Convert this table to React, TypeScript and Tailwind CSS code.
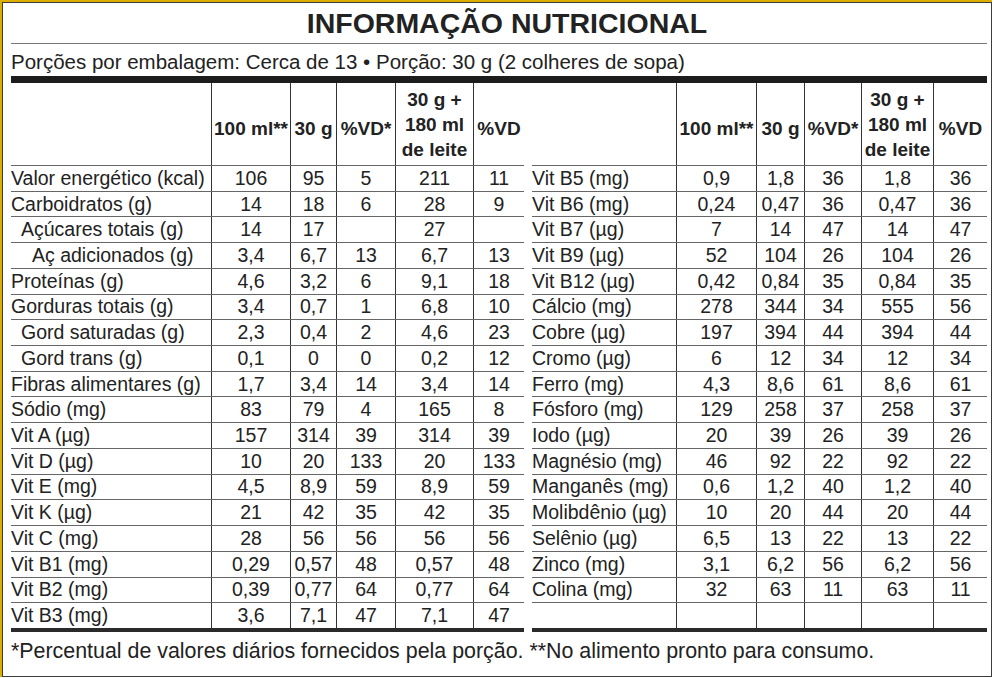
import React from 'react';

type Row = { label: string; indent?: 0 | 1 | 2; v: string[] };

const leftRows: Row[] = [
  { label: 'Valor energético (kcal)', v: ['106', '95', '5', '211', '11'] },
  { label: 'Carboidratos (g)', v: ['14', '18', '6', '28', '9'] },
  { label: 'Açúcares totais (g)', indent: 1, v: ['14', '17', '', '27', ''] },
  { label: 'Aç adicionados (g)', indent: 2, v: ['3,4', '6,7', '13', '6,7', '13'] },
  { label: 'Proteínas (g)', v: ['4,6', '3,2', '6', '9,1', '18'] },
  { label: 'Gorduras totais (g)', v: ['3,4', '0,7', '1', '6,8', '10'] },
  { label: 'Gord saturadas (g)', indent: 1, v: ['2,3', '0,4', '2', '4,6', '23'] },
  { label: 'Gord trans (g)', indent: 1, v: ['0,1', '0', '0', '0,2', '12'] },
  { label: 'Fibras alimentares (g)', v: ['1,7', '3,4', '14', '3,4', '14'] },
  { label: 'Sódio (mg)', v: ['83', '79', '4', '165', '8'] },
  { label: 'Vit A (µg)', v: ['157', '314', '39', '314', '39'] },
  { label: 'Vit D (µg)', v: ['10', '20', '133', '20', '133'] },
  { label: 'Vit E (mg)', v: ['4,5', '8,9', '59', '8,9', '59'] },
  { label: 'Vit K (µg)', v: ['21', '42', '35', '42', '35'] },
  { label: 'Vit C (mg)', v: ['28', '56', '56', '56', '56'] },
  { label: 'Vit B1 (mg)', v: ['0,29', '0,57', '48', '0,57', '48'] },
  { label: 'Vit B2 (mg)', v: ['0,39', '0,77', '64', '0,77', '64'] },
  { label: 'Vit B3 (mg)', v: ['3,6', '7,1', '47', '7,1', '47'] },
];

const rightRows: Row[] = [
  { label: 'Vit B5 (mg)', v: ['0,9', '1,8', '36', '1,8', '36'] },
  { label: 'Vit B6 (mg)', v: ['0,24', '0,47', '36', '0,47', '36'] },
  { label: 'Vit B7 (µg)', v: ['7', '14', '47', '14', '47'] },
  { label: 'Vit B9 (µg)', v: ['52', '104', '26', '104', '26'] },
  { label: 'Vit B12 (µg)', v: ['0,42', '0,84', '35', '0,84', '35'] },
  { label: 'Cálcio (mg)', v: ['278', '344', '34', '555', '56'] },
  { label: 'Cobre (µg)', v: ['197', '394', '44', '394', '44'] },
  { label: 'Cromo (µg)', v: ['6', '12', '34', '12', '34'] },
  { label: 'Ferro (mg)', v: ['4,3', '8,6', '61', '8,6', '61'] },
  { label: 'Fósforo (mg)', v: ['129', '258', '37', '258', '37'] },
  { label: 'Iodo (µg)', v: ['20', '39', '26', '39', '26'] },
  { label: 'Magnésio (mg)', v: ['46', '92', '22', '92', '22'] },
  { label: 'Manganês (mg)', v: ['0,6', '1,2', '40', '1,2', '40'] },
  { label: 'Molibdênio (µg)', v: ['10', '20', '44', '20', '44'] },
  { label: 'Selênio (µg)', v: ['6,5', '13', '22', '13', '22'] },
  { label: 'Zinco (mg)', v: ['3,1', '6,2', '56', '6,2', '56'] },
  { label: 'Colina (mg)', v: ['32', '63', '11', '63', '11'] },
  { label: '', v: ['', '', '', '', ''] },
];

const indentClass = ['pl-0', 'pl-[10px]', 'pl-[21px]'];

const NutritionTable: React.FC<{ rows: Row[]; widths: string[] }> = ({ rows, widths }) => (
  <div className="flex flex-col">
    {/* header */}
    <div className="flex h-[83px] border-b border-[#666] text-[19px] font-bold">
      <div className={widths[0]} />
      <div className={`${widths[1]} border-l border-[#333] flex items-center justify-center pt-[9px]`}>100 ml**</div>
      <div className={`${widths[2]} border-l border-[#333] flex items-center justify-center pt-[9px]`}>30 g</div>
      <div className={`${widths[3]} border-l border-[#333] flex items-center justify-center pt-[9px]`}>%VD*</div>
      <div className={`${widths[4]} border-l border-[#333] flex items-center justify-center text-center`}>
        <span>30 g +<br />180 ml<br />de leite</span>
      </div>
      <div className={`${widths[5]} border-l border-[#333] flex items-center justify-center pt-[9px]`}>%VD</div>
    </div>
    {rows.map((r, i) => {
      const last = i === rows.length - 1;
      return (
        <div
          key={i}
          className={last ? 'flex h-[28.5px] border-b-4 border-[#2a2a2a]' : 'flex h-[25.72px] border-b border-[#666]'}
        >
          <div className={`${widths[0]} ${indentClass[r.indent ?? 0]} flex items-center whitespace-nowrap`}>{r.label}</div>
          {r.v.map((val, j) => (
            <div key={j} className={`${widths[j + 1]} border-l border-[#333] flex items-center justify-center`}>
              {val}
            </div>
          ))}
        </div>
      );
    })}
  </div>
);

export default function App() {
  return (
    <div className="w-[994px] h-[678px] bg-white">
      <div className="w-[992px] h-[677px] border-t-2 border-l-2 border-[#dcae00]">
        <div className="h-full border border-[#3c3c3c] pl-[8px] pr-[4px] flex flex-col font-['Liberation_Sans',Arial,sans-serif] text-[#222] text-[19.5px] leading-[25px]">
          <div className="h-[41px] border-b border-[#777] flex items-center justify-center pl-[16px]">
            <h1 className="text-[28.5px] font-bold leading-none">INFORMAÇÃO NUTRICIONAL</h1>
          </div>
          <div className="h-[32px] flex items-center pt-[3px] text-[20.5px] whitespace-nowrap">
            Porções por embalagem: Cerca de 13 • Porção: 30 g (2 colheres de sopa)
          </div>
          <div className="h-[7px] bg-[#1c1c1c]" />
          <div className="flex gap-[8px]">
            <div className="w-[513px]">
              <NutritionTable
                rows={leftRows}
                widths={['w-[200px]', 'w-[79px]', 'w-[46px]', 'w-[59px]', 'w-[78px]', 'w-[51px]']}
              />
            </div>
            <div className="w-[455px]">
              <NutritionTable
                rows={rightRows}
                widths={['w-[144px]', 'w-[80px]', 'w-[48px]', 'w-[57px]', 'w-[72px]', 'w-[54px]']}
              />
            </div>
          </div>
          <div className="flex-1 flex items-center pb-[4px] text-[21.4px] whitespace-nowrap">
            *Percentual de valores diários fornecidos pela porção. **No alimento pronto para consumo.
          </div>
        </div>
      </div>
    </div>
  );
}
